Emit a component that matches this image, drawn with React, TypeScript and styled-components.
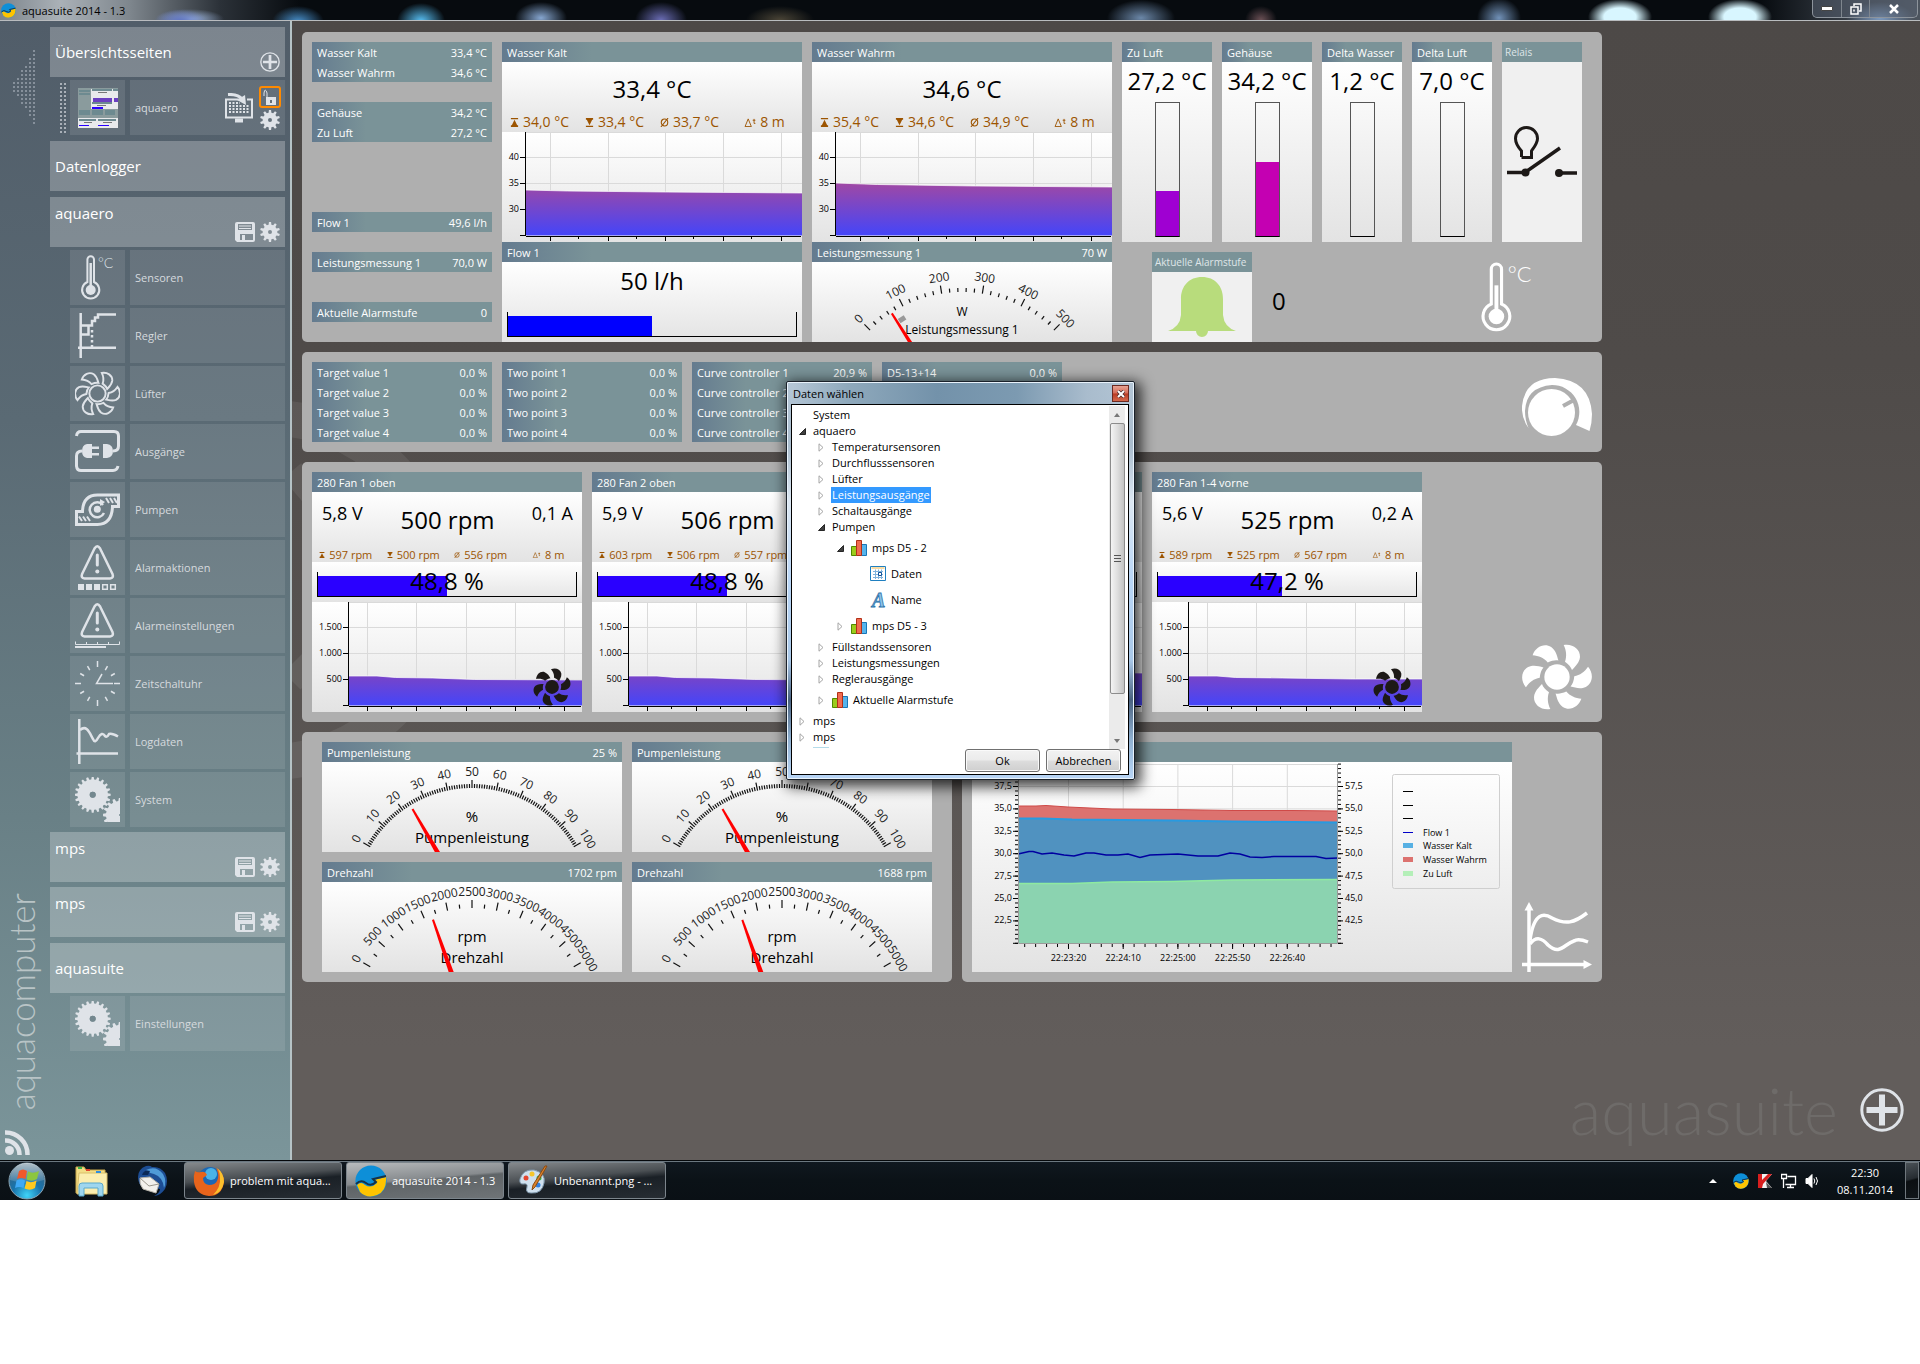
import React from 'react';
import styled, { createGlobalStyle, css } from 'styled-components';

/* ---------- theme ---------- */

const font = '"Open Sans", "Noto Sans", sans-serif';
const thin = 'Lato, "Open Sans", sans-serif';
const ink = '#dfe3e8';
const headerFill = 'linear-gradient(90deg, #647b8f 0, #7a9398 30%, #7a9398 100%)';
const bodyFill = 'linear-gradient(180deg, #ffffff 0, #e3e3e3 100%)';

const GlobalStyle = createGlobalStyle`
  * { box-sizing: border-box; }
  body { margin: 0; background: #fff; font-family: ${font}; font-size: 11px; color: #000; }
  button { font: inherit; color: inherit; border: 0; padding: 0; background: none; text-align: left; }
  svg { display: block; flex: none; }
  ul { list-style: none; margin: 0; padding: 0; }
  h2, h3, p { margin: 0; font-weight: 400; }
`;

const Desktop = styled.div`
  position: relative;
  display: flex;
  flex-direction: column;
  min-height: 1200px;
`;

/* ---------- title bar ---------- */

const TitleBar = styled.header`
  display: flex;
  align-items: center;
  gap: 6px;
  height: 21px;
  padding-left: 1px;
  border-bottom: 1px solid #b9bcbf;
  line-height: 20px;
  background:
    radial-gradient(ellipse 26px 12px at 180px 21px, #5f74c4, transparent),
    radial-gradient(ellipse 34px 10px at 190px 19px, #9fb8e0, transparent),
    radial-gradient(ellipse 26px 16px at 298px 22px, #4a93d0, transparent),
    radial-gradient(ellipse 24px 18px at 421px 21px, #58c0f5, transparent),
    radial-gradient(ellipse 26px 16px at 541px 18px, #86a6d0, transparent),
    radial-gradient(ellipse 26px 18px at 661px 20px, #6a6cb4, transparent),
    radial-gradient(ellipse 34px 14px at 780px 20px, #4a4436, transparent),
    radial-gradient(ellipse 34px 18px at 1141px 18px, #6b87a8, transparent),
    radial-gradient(ellipse 16px 14px at 1261px 20px, #6b5055, transparent),
    radial-gradient(ellipse 22px 20px at 1499px 18px, #7191b8, transparent),
    radial-gradient(ellipse 32px 18px at 1620px 17px, #d8f6ff 50%, transparent),
    radial-gradient(ellipse 32px 18px at 1740px 17px, #d8f6ff 50%, transparent),
    radial-gradient(ellipse 34px 16px at 1880px 18px, #7c9ac0, transparent),
    linear-gradient(90deg, #7d858c 0, #aab1b7 60px, #7e868d 130px, #2b3138 220px, #070b0f 300px,
      #070b0f calc(100% - 160px), #3c434c calc(100% - 60px), #4c545e 100%);
`;

const TitleText = styled.span`
  flex: 1;
  padding-top: 1px;
`;

const WindowButtons = styled.div`
  display: grid;
  grid-template-columns: 28px 28px 48px;
  align-self: flex-start;
  height: 18px;
  margin-right: 2px;
  border: 1px solid #8d949c;
  border-top: 0;
  border-radius: 0 0 5px 5px;
  background: rgba(90, 100, 115, 0.5);
`;

const WindowButton = styled.button`
  display: flex;
  align-items: center;
  justify-content: center;
  & + & { border-left: 1px solid #7f868e; }
`;

/* ---------- frame ---------- */

const AppWindow = styled.div`
  flex: 1;
  display: flex;
`;

const Sidebar = styled.aside`
  display: flex;
  flex: none;
  padding-right: 5px;
  border-right: 2px solid #b6c3c6;
  background: linear-gradient(180deg, #515d69 0, #5a6a74 35%, #698086 70%, #7b959a 100%);
`;

const Rail = styled.div`
  display: flex;
  flex-direction: column;
  align-items: flex-start;
  width: 50px;
  padding: 29px 0 5px 5px;
`;

const Brand = styled.div`
  margin: auto 0 20px 0;
  writing-mode: vertical-rl;
  transform: rotate(180deg);
  font: 300 35px/32px ${thin};
  color: #b9c4c6;
`;

const Nav = styled.nav`
  display: flex;
  flex-direction: column;
  gap: 6px;
  width: 235px;
  padding-top: 6px;
`;

const NavGroup = styled.div<{ $gap?: number }>`
  display: flex;
  flex-direction: column;
  gap: ${p => p.$gap ?? 3}px;
`;

const NavHead = styled.div<{ $top?: boolean }>`
  display: flex;
  justify-content: space-between;
  height: 50px;
  padding: 5px;
  background: rgba(255, 255, 255, 0.25);
  color: #fff;
  font-size: 15px;
  line-height: ${p => (p.$top ? '23px' : '40px')};
`;

const HeadTools = styled.div`
  display: flex;
  gap: 5px;
  align-self: flex-end;
`;

const NavItem = styled.div`
  display: grid;
  grid-template-columns: 55px 155px;
  gap: 5px;
  justify-content: end;
  position: relative;
`;

const NavIcon = styled.div`
  display: flex;
  align-items: center;
  justify-content: center;
  height: 55px;
  background: rgba(255, 255, 255, 0.1);
  color: ${ink};
`;

const NavLabel = styled.div`
  display: flex;
  align-items: center;
  gap: 6px;
  padding: 0 4px 0 5px;
  background: rgba(255, 255, 255, 0.1);
  color: #d6dade;
`;

const NavButton = styled.button`
  flex: 1;
  height: 100%;
`;

const ToolColumn = styled.div`
  display: flex;
  flex-direction: column;
  align-items: center;
  gap: 2px;
`;

const LockButton = styled.button`
  width: 22px;
  height: 22px;
  border: 2px solid #ff8a00;
  border-radius: 3px;
`;

const Grip = styled.div`
  position: absolute;
  left: 9px;
  top: 2px;
  width: 7px;
  height: 53px;
  background: radial-gradient(circle, #a9b0b8 1px, transparent 1px) 0 0 / 4px 4px;
`;

const Main = styled.main`
  position: relative;
  flex: 1;
  min-width: 0;
  display: flex;
  flex-direction: column;
  gap: 10px;
  padding: 11px 10px 28px;
  background: linear-gradient(180deg, #4d4947 0, #4f4b49 30%, #625d5b 90%, #625d5b 100%);
`;

const Backdrop = styled.svg`
  position: absolute;
  left: 0;
  top: 360px;
`;

const Panel = styled.section<{ $pad?: string; $grow?: boolean }>`
  position: relative;
  display: flex;
  gap: 10px;
  max-width: 1300px;
  padding: ${p => p.$pad ?? '10px'};
  border-radius: 5px;
  background: #afafaf;
  ${p => p.$grow && css`flex: 1;`}
`;

const PanelRow = styled.div`
  display: flex;
  gap: 10px;
  max-width: 1300px;
`;

const Corner = styled.div`
  align-self: flex-end;
  margin-left: auto;
  color: #fff;
`;

const Foot = styled.footer`
  display: flex;
  align-items: center;
  justify-content: flex-end;
  gap: 22px;
  margin-top: auto;
  padding-right: 6px;
  color: ${ink};
`;

const Watermark = styled.span`
  font: 300 65px/44px ${thin};
  color: #6e6b69;
`;

/* ---------- widgets ---------- */

const Stack = styled.div<{ $gap?: number }>`
  display: flex;
  flex-direction: column;
  gap: ${p => p.$gap ?? 0}px;
`;

const ValueList = styled.div<{ $before?: number }>`
  width: 180px;
  margin-top: ${p => p.$before ?? 0}px;
  background: ${headerFill};
  color: #fff;
`;

const ValueRow = styled.div`
  display: flex;
  justify-content: space-between;
  height: 20px;
  padding: 0 5px;
  line-height: 21px;
  white-space: nowrap;
`;

const Widget = styled.article<{ $width: number; $flat?: boolean }>`
  display: flex;
  flex-direction: column;
  width: ${p => p.$width}px;
  ${p => p.$flat && css`background: #f0f0f0;`}
`;

const WidgetHead = styled.h3<{ $flat?: boolean }>`
  display: flex;
  justify-content: space-between;
  height: 20px;
  padding: 0 ${p => (p.$flat ? 3 : 5)}px;
  background: ${p => (p.$flat ? '#7a9398' : headerFill)};
  color: ${p => (p.$flat ? '#dfe6e8' : '#fff')};
  font-size: ${p => (p.$flat ? 10 : 11)}px;
  line-height: 21px;
  white-space: nowrap;
`;

const Body = styled.div<{ $height: number }>`
  display: flex;
  flex-direction: column;
  height: ${p => p.$height}px;
  background: ${bodyFill};
`;

const Big = styled.p<{ $line: number }>`
  font-size: 24px;
  line-height: ${p => p.$line}px;
  text-align: center;
  white-space: nowrap;
`;

const FanValues = styled.div`
  display: grid;
  grid-template-columns: 1fr auto 1fr;
  padding: 0 9px 0 10px;
`;

const Side = styled.span<{ $end?: boolean }>`
  font-size: 18px;
  line-height: 42px;
  text-align: ${p => (p.$end ? 'right' : 'left')};
`;

const StatGrid = styled.div<{ $small?: boolean }>`
  display: grid;
  grid-template-columns: repeat(4, 1fr);
  color: #9c5400;
  font-size: ${p => (p.$small ? 11 : 14)}px;
  line-height: ${p => (p.$small ? 14 : 12)}px;
`;

const Stat = styled.span`
  display: flex;
  align-items: center;
  justify-content: center;
  gap: 4px;
  white-space: nowrap;
`;

const BarFrame = styled.div`
  position: relative;
  height: 25px;
  margin: auto 5px 5px;
  padding-top: 4px;
  border: 1px solid #000;
  border-top: 0;
`;

const BarFill = styled.div<{ $color: string }>`
  height: 100%;
  background: ${p => p.$color};
`;

const BarText = styled.span`
  position: absolute;
  inset: 0;
  font-size: 24px;
  line-height: 18px;
  text-align: center;
`;

const Column = styled.div`
  display: flex;
  flex-direction: column;
  justify-content: flex-end;
  align-self: center;
  width: 25px;
  height: 135px;
  margin: auto 0 5px;
  border: 1px solid #555;
  border-bottom-color: #000;
`;

const AlarmRow = styled.div`
  display: flex;
  gap: 20px;
  padding: 0 40px 0 30px;
`;

const AlarmValue = styled.div`
  display: flex;
  align-items: center;
  padding-top: 8px;
`;

const Center = styled.div<{ $height: number }>`
  display: flex;
  align-items: center;
  justify-content: center;
  height: ${p => p.$height}px;
`;

const ChartSvg = styled.svg`
  font-family: ${font};
`;

const FanChart = styled.div`
  position: relative;
`;

const FanBadge = styled.div`
  position: absolute;
  right: 11px;
  bottom: 6px;
  color: #1d1917;
`;

const GaugeGrid = styled.div`
  display: grid;
  grid-template-columns: 300px 300px;
  gap: 10px;
`;

/* ---------- dialog ---------- */

const Dialog = styled.div`
  position: absolute;
  left: 786px;
  top: 381px;
  width: 349px;
  padding: 0 5px 4px 4px;
  border: 1px solid #1b222b;
  border-radius: 2px;
  box-shadow: inset 0 0 0 1px #e8f2fb, 3px 4px 14px 3px rgba(0, 0, 0, 0.75);
  background:
    linear-gradient(90deg, transparent 0, transparent 6px, #8fa9bc 60px, #7392aa 150px, #7c9ab1 230px, #a9bccd 300px, transparent 343px) 0 1px / 100% 21px no-repeat,
    linear-gradient(180deg, #b4c6d6 0, #a9bccd 16%, #dce7f2 30%, #b9d6f7 50%, #a9c8e8 70%, #4a6280 80%, #8fb0d0 90%, #b9d6f7 100%);
`;

const DialogTitle = styled.div`
  display: flex;
  align-items: center;
  justify-content: space-between;
  height: 22px;
  padding: 1px 0 0 2px;
  line-height: 20px;
`;

const CloseButton = styled.button`
  display: flex;
  align-items: center;
  justify-content: center;
  width: 17px;
  height: 17px;
  border: 1px solid #6b2a22;
  background: linear-gradient(180deg, #e8a394 0, #d56a55 48%, #b83a22 52%, #d4694c 100%);
`;

const DialogBody = styled.div`
  padding: 1px 3px 2px 1px;
  border: 1px solid #000;
  background: #fff;
`;

const TreeArea = styled.div`
  display: flex;
  justify-content: space-between;
  height: 343px;
  overflow: hidden;
`;

const Tree = styled.ul`
  padding-top: 1px;
`;

const Branch = styled.li<{ $tall?: boolean; $level: number }>`
  display: flex;
  align-items: center;
  height: ${p => (p.$tall ? 26 : 16)}px;
  padding-left: ${p => 1 + p.$level * 19}px;
  line-height: 16px;
`;

const NextBranch = styled.li`
  width: 16px;
  height: 1px;
  margin: 2px 0 0 20px;
  background: #b5dcea;
`;

const Twist = styled.span`
  flex: none;
  display: flex;
  align-items: center;
  width: 19px;
  padding-left: 5px;
`;

const BranchLabel = styled.button<{ $on?: boolean }>`
  display: flex;
  align-items: center;
  gap: 5px;
  height: 16px;
  line-height: 16px;
  ${p => p.$on && css`
    margin: 0 -1px;
    padding: 0 1px;
    background: #3399ff;
    color: #fff;
  `}
`;

const ScrollTrack = styled.div`
  display: flex;
  flex-direction: column;
  align-items: center;
  width: 16px;
  background: #ebebeb;
`;

const ScrollArrow = styled.button`
  display: flex;
  align-items: center;
  justify-content: center;
  width: 16px;
  height: 17px;
`;

const ScrollThumb = styled.div`
  display: flex;
  align-items: center;
  justify-content: center;
  width: 15px;
  height: 271px;
  margin-bottom: auto;
  border: 1px solid #8c8c8c;
  border-radius: 2px;
  background: linear-gradient(90deg, #f4f4f4 0, #dedede 50%, #c2c2c2 100%);
`;

const DialogActions = styled.div`
  display: flex;
  justify-content: flex-end;
  gap: 6px;
  padding-right: 4px;
`;

const DialogButton = styled.button`
  width: 75px;
  height: 23px;
  border: 1px solid #707070;
  border-radius: 3px;
  box-shadow: inset 0 0 0 1px #fafafa;
  background: linear-gradient(180deg, #f2f2f2 0, #ebebeb 49%, #dddddd 51%, #cfcfcf 100%);
  text-align: center;
`;

/* ---------- taskbar ---------- */

const Taskbar = styled.div`
  display: flex;
  align-items: stretch;
  height: 40px;
  border-top: 1px solid #05080b;
  box-shadow: inset 0 1px 0 #6b7780;
  background: linear-gradient(180deg, #101820 0, #0b1217 50%, #0a1015 100%);
  color: #fff;
`;

const Launcher = styled.div`
  display: flex;
  align-items: center;
  gap: 28px;
  width: 184px;
  padding-left: 8px;
`;

const TaskButton = styled.button<{ $active?: boolean }>`
  display: flex;
  align-items: center;
  gap: 5px;
  width: 158px;
  margin: 1px 4px 1px 0;
  padding-left: 8px;
  border: 1px solid #7c858c;
  border-radius: 3px;
  white-space: nowrap;
  background: ${p =>
    p.$active
      ? 'linear-gradient(175deg, #b9bcbe 0, #878b8e 45%, #5f6467 50%, #6f7477 100%)'
      : 'linear-gradient(175deg, #85898c 0, #4b5054 40%, #1a2026 55%, #272d33 100%)'};
`;

const Tray = styled.div`
  display: flex;
  align-items: center;
  gap: 8px;
  margin-left: auto;
`;

const Clock = styled.div`
  width: 72px;
  line-height: 17px;
  text-align: center;
`;

const ShowDesktop = styled.button`
  align-self: stretch;
  width: 14px;
  margin: 1px 1px 1px -4px;
  border: 1px solid #6f777d;
  background: linear-gradient(165deg, #4a5157 0, #262c31 45%, #0b0f12 50%, #11161a 100%);
`;

/* ---------- icons ---------- */

const BLADE =
  'M20,-96 C45,-101 70,-85 69,-60 C67,-42 55,-32 45,-21 C42,-30 35,-38 24,-46 C30,-62 28,-80 20,-96Z';

function Fan({ size, outline, turn = 0 }: { size: number; outline?: boolean; turn?: number }) {
  return (
    <svg
      width={size}
      height={size}
      viewBox="-105 -105 210 210"
      fill={outline ? 'none' : 'currentColor'}
      stroke={outline ? 'currentColor' : 'none'}
      strokeWidth="9"
    >
      <circle r="38" />
      {[0, 60, 120, 180, 240, 300].map(a => (
        <path key={a} d={BLADE} transform={`rotate(${a + turn})`} />
      ))}
    </svg>
  );
}

function gearPath(cx: number, cy: number, teeth: number, outer: number, inner: number, hole: number) {
  const pts: string[] = [];
  const step = (Math.PI * 2) / teeth;
  for (let i = 0; i < teeth; i++) {
    const a = i * step - Math.PI / 2;
    [
      [-0.3, inner],
      [-0.17, outer],
      [0.17, outer],
      [0.3, inner],
    ].forEach(([o, r]) => {
      pts.push(`${(cx + Math.cos(a + o * step) * r).toFixed(2)},${(cy + Math.sin(a + o * step) * r).toFixed(2)}`);
    });
  }
  return `M${pts.join('L')}Z M${cx + hole},${cy} a${hole},${hole} 0 1 0 ${-2 * hole},0 a${hole},${hole} 0 1 0 ${2 * hole},0Z`;
}

const Gear = () => (
  <svg width="20" height="20" viewBox="0 0 20 20">
    <path d={gearPath(10, 10, 10, 10, 7.4, 2)} fill={ink} fillRule="evenodd" />
  </svg>
);

const Disk = () => (
  <svg width="20" height="20" viewBox="0 0 20 20" fill={ink}>
    <path
      fillRule="evenodd"
      d="M2 0H18Q20 0 20 2V18Q20 20 18 20H2L0 18V2Q0 0 2 0ZM3 2V8H17V2ZM5 12V18H18V12Z"
    />
    <path d="M4 3.5H16V4.5H4ZM4 6H16V7H4ZM7 13H10V18H7Z" />
  </svg>
);

const Plus = ({ size }: { size: number }) => (
  <svg width={size} height={size} viewBox="0 0 44 44" fill="none" stroke={ink}>
    <circle cx="22" cy="22" r="20.2" strokeWidth="3" />
    <path d="M22 6.500V37.500M6.500 22H37.500" strokeWidth="6" />
  </svg>
);

const Thermo = ({ size, level = 8 }: { size: number; level?: number }) => (
  <svg width={size} height={size} viewBox="0 0 45 45" fill="none" stroke="currentColor" strokeWidth="2">
    <path d="M12.400 27V4.600a3.300 3.300 0 0 1 6.600 0V27a8.600 8.600 0 1 1-6.600 0Z" />
    <circle cx="15.700" cy="35" r="5" fill="currentColor" stroke="none" />
    <path d={`M15.700 ${level}V34`} strokeWidth="2.500" />
    <text x="23" y="13" fill="currentColor" stroke="none" fontFamily={thin} fontWeight="300" fontSize="14">
      °C
    </text>
  </svg>
);

const NavSvg = styled.svg.attrs({ width: 45, height: 45, viewBox: '0 0 45 45' })`
  fill: none;
  stroke: ${ink};
  color: ${ink};
`;

const warn = (
  <>
    <path d="M19.500 3.500Q22.300-1 25.100 3.500L37.500 29Q39 33 35 33.500H9.600Q5.600 33 7.100 29Z" strokeWidth="2.500" />
    <path d="M22.300 10V20" strokeWidth="3" strokeLinecap="round" />
    <circle cx="22.300" cy="26.500" r="2" fill={ink} stroke="none" />
  </>
);

const icons: Record<string, React.ReactNode> = {
  Sensoren: <Thermo size={45} />,
  Regler: (
    <NavSvg strokeWidth="2.500">
      <path d="M5.700 0V45M3 34.700H41M5 12.500H17V8H20V4.500H23V1.500H41M5 21.500H13.500V13" />
      <path d="M17 17V34" strokeDasharray="2.500 2.500" />
    </NavSvg>
  ),
  Lüfter: <Fan size={45} outline />,
  Ausgänge: (
    <NavSvg strokeWidth="3">
      <path d="M1.500 7Q2 2.500 6 2.500H39Q43.500 2.500 43.500 7V17Q43.500 22 38 22M7 22Q1.500 22 1.500 27V37Q2 41.500 6 41.500H38Q42 41.500 43 37" />
      <path d="M17 15H12Q7 16 7 22Q7 28 12 29H17ZM28 15H32Q38 16 38 22Q38 28 32 29H28ZM17 17.500H24V20H17ZM17 24H24V26.500H17Z" fill={ink} stroke="none" />
    </NavSvg>
  ),
  Pumpen: (
    <NavSvg strokeWidth="3">
      <path d="M1.500 24.500H7.500Q8 8 22.500 8H43.500V19.500H37.500Q37 37 22.500 37.500H1.500Z" />
      <path d="M28 18A7.500 7.500 0 1 0 29 26" strokeWidth="2.500" />
      <path d="M25 12L30 15L25 19Z" fill={ink} stroke="none" />
      <circle cx="22.300" cy="22.300" r="3.500" fill={ink} stroke="none" />
      <path d="M31 11L34 16M35 11L38 16M39 11L42 16M4 29.500L7 34M8 29.500L11 34M12 29.500L15 34" strokeWidth="2" />
    </NavSvg>
  ),
  Alarmaktionen: (
    <NavSvg>
      {warn}
      <path d="M3 39H9V45H3ZM11 39H17V45H11ZM19 39H25V45H19Z" fill={ink} stroke="none" />
      <path d="M27.700 39.700H32.300V44.300H27.700ZM35.700 39.700H40.300V44.300H35.700Z" strokeWidth="1.500" />
    </NavSvg>
  ),
  Alarmeinstellungen: (
    <NavSvg>
      {warn}
      <path d="M.5 38.500V41.500H44.500V38.500M11.500 39V41M22.500 39V41M33.500 39V41" />
      <path d="M0 44H31" strokeWidth="2" />
    </NavSvg>
  ),
  Zeitschaltuhr: (
    <NavSvg strokeWidth="1.500">
      {Array.from({ length: 12 }, (_, i) => (
        <path key={i} d={i % 3 ? 'M22.500 2.500V7' : 'M22.500 0V6'} transform={`rotate(${i * 30} 22.5 22.5)`} />
      ))}
      <path d="M27 13L21.500 22.500H38" />
    </NavSvg>
  ),
  Logdaten: (
    <NavSvg strokeWidth="2.500">
      <path d="M4.300 0V45M1.500 34.500H43" />
      <path d="M5 11C12 5 15 15 18 20Q20 25 23 19Q27 12 30 17Q32 19 34 15Q37 14 43 17.500" />
    </NavSvg>
  ),
  System: (
    <NavSvg>
      <path
        d={`${gearPath(17.7, 17.7, 20, 18, 15.2, 3)} ${gearPath(45, 38, 16, 17, 14, 1)}`}
        fill={ink}
        stroke="none"
        fillRule="nonzero"
      />
      <circle cx="17.700" cy="17.700" r="3" fill="#74888f" stroke="none" />
    </NavSvg>
  ),
};

const Thumb = () => (
  <svg width="40" height="40" viewBox="0 0 40 40">
    <path d="M0 0H40V40H0Z" fill="#e9eaec" />
    <path d="M0 0H40V1H0ZM0 0H13V21H0ZM0 21H40V30H0Z" fill="#8a9b9d" />
    <path d="M1 2H12V4H1ZM1 5H12V7H1ZM14 1H34V3H14ZM35 1H40V3H35ZM14 14H34V16H14ZM1 22H12V27H1ZM14 22H25V27H14ZM27 22H37V27H27ZM1 31H18V33H1ZM20 31H38V33H20Z" fill="#6d8a90" />
    <path d="M15 10H34V14H15ZM36 10H40V14H36Z" fill="#6a3fc0" />
    <path d="M14 19H25V21H14ZM1 37H11V38H1ZM20 37H31V38H20Z" fill="#2a00ff" />
    <path d="M20 4H29V5H20ZM19 17H28V18H19ZM6 34H14V35H6ZM25 34H34V35H25Z" fill="#777" />
  </svg>
);

const Desk = () => (
  <svg width="28" height="30" viewBox="0 0 28 30" fill="none" stroke={ink}>
    <path d="M15 6.500H1V24.500H27V6.500H22" strokeWidth="2" />
    <path d="M4 10H15M4 13H24M4 16H24M4 19H24" strokeDasharray="2 1.500" strokeWidth="2" />
    <path d="M10 27.500H18" strokeWidth="4" />
    <path d="M3 1.500Q13 1 17 6" strokeWidth="3" />
    <path d="M12 7L21 12L20 2Z" fill={ink} stroke="none" />
  </svg>
);

const Lock = () => (
  <svg width="18" height="18" viewBox="0 0 18 18">
    <path d="M3 8V5Q4-1 6 5V9" fill="none" stroke={ink} />
    <path fillRule="evenodd" d="M5 9H15V17H5ZM9 12V15H11V12Z" fill={ink} />
  </svg>
);

const CollapseArrow = () => (
  <svg width="30" height="76" viewBox="0 0 30 76" fill="#86909b">
    {Array.from({ length: 6 }, (_, c) =>
      Array.from({ length: 19 }, (_, r) =>
        Math.abs(r - 9) <= 1.6 * c + 1 ? <path key={`${c}-${r}`} d={`M${8 + c * 4} ${r * 4}h2v2h-2z`} /> : null,
      ),
    )}
  </svg>
);

const Rss = () => (
  <svg width="25" height="25" viewBox="0 0 25 25" fill="none" stroke={ink} strokeWidth="4.500">
    <circle cx="4.500" cy="20.500" r="4.500" fill={ink} stroke="none" />
    <path d="M0 10.500A14 14 0 0 1 14.500 25M0 2.500A22 22 0 0 1 22.500 25" />
  </svg>
);

const AquaLogo = ({ size }: { size: number }) => (
  <svg width={size} height={size} viewBox="0 0 16 16">
    <circle cx="8" cy="8" r="7.800" fill="#0d8fd8" />
    <path d="M1 10Q3 8 5 10Q8 12 11 9L9.500 7.500L15.500 6Q16 13 11 15Q6 17 2.500 13.500Z" fill="#ffc400" />
    <path d="M.5 9.500Q3 7 5.500 9Q8 11 10.500 8.500L9 7L15.500 5.500" fill="none" stroke="#16324a" strokeWidth="1" />
  </svg>
);

const Knob = () => (
  <svg width="70" height="70" viewBox="0 0 70 70">
    <path d="M6.500 56A34 34 0 0 1 0 34Q3 6 33 6Q68 8 70 42Q70 51 67.500 59L54 53A27 27 0 0 0 30 13Q4 15 3 39Q3 48 6.500 56Z" fill="#fff" />
    <circle cx="29.500" cy="40.500" r="23.500" fill="#fff" />
    <path d="M41 34L52 28" stroke="#afafaf" strokeWidth="4" />
  </svg>
);

const CurveIcon = () => (
  <svg width="70" height="70" viewBox="0 0 70 70" fill="none" stroke="#fff" strokeWidth="3.500">
    <path d="M7 70V8M0 62.500H64" />
    <path d="M7 0L11.500 8.500H2.500ZM70 62.500L61.500 58V67Z" fill="#fff" stroke="none" />
    <path d="M8 38C12 10 22 11 30 16C44 23 52 21 65 11M8 42C14 34 20 36 26 43C38 54 42 42 52 39Q56 36 66 40" />
  </svg>
);

const Relay = () => (
  <svg width="70" height="52" viewBox="0 0 70 52" fill="none" stroke="#1d1917" strokeWidth="3">
    <path d="M14.500 31V25C10 20 8.500 16 8.500 12.500A11 11 0 0 1 30.500 12.500C30.500 17 28 20 24.500 25V31.500H14.500" />
    <path d="M0 46.500H18L53 22M52 47H70" strokeWidth="3.500" />
    <circle cx="18.500" cy="46.500" r="4" fill="#1d1917" stroke="none" />
    <circle cx="52" cy="47" r="4" fill="#1d1917" stroke="none" />
  </svg>
);

const Bell = () => (
  <svg width="68" height="61" viewBox="0 0 68 61" fill="#b8dc7c">
    <path d="M34 0C47 0 55 9 55 22V38Q56 50 68 54H40A6 6 0 0 1 28 54H0Q12 50 13 38V22C13 9 21 0 34 0Z" />
  </svg>
);

const Bars = () => (
  <svg width="16" height="16" viewBox="0 0 16 16">
    <path d="M.5 6.500H5.500V15.500H.5Z" fill="#9ccc1c" stroke="#4f8a00" />
    <path d="M10.500 4.500H15.500V15.500H10.500Z" fill="#56b4ec" stroke="#1777b8" />
    <path d="M5.500 .5H10.500V15.500H5.500Z" fill="#f26b50" stroke="#b23018" />
  </svg>
);

const Sheet = () => (
  <svg width="16" height="16" viewBox="0 0 16 16">
    <path d="M.5 .5H15.500V14.500H.5Z" fill="#fff" stroke="#1f7fc0" />
    <path d="M1.500 2H14.500" stroke="#f2b84b" />
    <path d="M3 5.500H13M3 8.500H13M3 11.500H13M5.500 3.500V13M8.500 3.500V13M11.500 3.500V13" stroke="#7fb2dc" />
    <path d="M8.500 6.500H11.500V9.500H8.500Z" fill="#fff" stroke="#14549a" />
  </svg>
);

const LetterA = () => (
  <svg width="16" height="16" viewBox="0 0 16 16">
    <text x="2" y="15" fontFamily='"Liberation Serif", serif' fontStyle="italic" fontWeight="700" fontSize="20" fill="#8cc4ec" stroke="#2f74aa" strokeWidth=".8">
      A
    </text>
  </svg>
);

const Closed = () => (
  <svg width="6" height="9" viewBox="0 0 6 9">
    <path d="M1 .8L5 4.500L1 8.200Z" fill="#fff" stroke="#a5a5a5" />
  </svg>
);

const Open = () => (
  <svg width="7" height="7" viewBox="0 0 7 7">
    <path d="M6.500 .5V6.500H.5Z" fill="#404040" stroke="#262626" />
  </svg>
);

function StatIcon({ kind, small }: { kind: string; small?: boolean }) {
  const s = small ? 6 : 9;
  return (
    <svg width={kind === 'time' ? s + 3 : s} height={s} viewBox={kind === 'time' ? '0 0 13 10' : '0 0 10 10'} fill="currentColor" stroke="none">
      {kind === 'max' && <path d="M1 0H9V1.500H1ZM5 2L8 8H9V10H1V8H2Z" />}
      {kind === 'min' && <path d="M1 8.500H9V10H1ZM5 8L2 2H1V0H9V2H8Z" />}
      {kind === 'avg' && (
        <g fill="none" stroke="currentColor" strokeWidth="1.200">
          <ellipse cx="5" cy="5" rx="3.600" ry="3.800" />
          <path d="M1 10L9 0" />
        </g>
      )}
      {kind === 'time' && (
        <g fill="none" stroke="currentColor">
          <path d="M1 9.500L4.500 1L8 9.500Z" />
          <path d="M11 1V6H12.500M9.500 2.500H12.500" />
        </g>
      )}
    </svg>
  );
}

/* ---------- composed widgets ---------- */

const STATS = ['max', 'min', 'avg', 'time'];

const Stats = ({ values, small }: { values: string[]; small?: boolean }) => (
  <StatGrid $small={small}>
    {values.map((v, i) => (
      <Stat key={STATS[i]}>
        <StatIcon kind={STATS[i]} small={small} />
        {v}
      </Stat>
    ))}
  </StatGrid>
);

const Values = ({ rows, before }: { rows: [string, string][]; before?: number }) => (
  <ValueList $before={before}>
    {rows.map(([k, v]) => (
      <ValueRow key={k}>
        <span>{k}</span>
        <span>{v}</span>
      </ValueRow>
    ))}
  </ValueList>
);

interface TrendProps {
  id: string;
  width: number;
  axis: number;
  first: number;
  step: number;
  labels: string[];
  line: [number, number][];
  top: string;
}

function Trend({ id, width, axis, first, step, labels, line, top }: TrendProps) {
  const xs = [0, 1, 2, 3, 4].map(i => Math.round(first + i * step) + 0.5);
  const pts = line.map(([x, y]) => `${axis + x * (width - axis)},${y}`).join(' L');
  return (
    <ChartSvg width={width} height="110" viewBox={`0 0 ${width} 110`}>
      <defs>
        <linearGradient id={id} x1="0" x2="0" y1="0" y2="1">
          <stop offset="0" stopColor={top} />
          <stop offset="1" stopColor="#4545f8" />
        </linearGradient>
        <linearGradient id={`${id}-bg`} x1="0" x2="0" y1="0" y2="1">
          <stop offset="0" stopColor="#fff" />
          <stop offset="1" stopColor="#e3e3e3" />
        </linearGradient>
      </defs>
      <path d={`M0 0H${width}V110H0Z`} fill={`url(#${id}-bg)`} />
      <path d={xs.map(x => `M${x} 0V103`).join('') + [0.5, 25.5, 51.5, 77.5].map(y => `M${axis} ${y}H${width}`).join('')} stroke="#dadada" />
      <path d={`M${pts} L${width},103 L${axis},103Z`} fill={`url(#${id})`} />
      <path d={`M${pts}`} fill="none" stroke="#fff" strokeOpacity=".7" />
      <path d={`M${axis + 0.5} 103.500H${width}`} stroke="#a5a5f5" />
      <path
        d={
          `M${axis - 0.5} 0V104M${axis} 104.500H${width - 1}` +
          [25.5, 51.5, 77.5, 103.5].map(y => `M${axis - 6} ${y}H${axis}`).join('') +
          xs.map(x => `M${x} 105V109`).join('') +
          xs.slice(0, 4).map(x => `M${Math.round(x + step / 2) - 0.5} 105V107`).join('')
        }
        stroke="#000"
      />
      {labels.map((t, i) => (
        <text key={t} x={axis - 7} y={28 + i * 26} fontSize="9" textAnchor="end">
          {t}
        </text>
      ))}
    </ChartSvg>
  );
}

interface GaugeProps {
  height: number;
  radius: number;
  cy: number;
  sweep: number;
  max: number;
  major: number;
  minor: number;
  value: number;
  unit: string;
  name: string;
  unitY: number;
  nameY: number;
  size: number;
  pivot: number;
  reach: number;
  marker?: boolean;
}

function Gauge(g: GaugeProps) {
  const at = (v: number) => -g.sweep + (v / g.max) * g.sweep * 2;
  const ticks = Array.from({ length: Math.round(g.max / g.minor) + 1 }, (_, i) => i * g.minor);
  const labels = ticks.filter(v => v % g.major === 0);
  const tip = g.pivot - g.reach;
  return (
    <ChartSvg width="300" height={g.height} viewBox={`0 0 300 ${g.height}`}>
      {ticks.map(v => (
        <path
          key={v}
          d={`M150 ${g.cy - g.radius + (v % g.major ? 4 : 0)}V${g.cy - g.radius + 8}`}
          transform={`rotate(${at(v)} 150 ${g.cy})`}
          stroke="#111"
          strokeWidth="1.200"
        />
      ))}
      {labels.map(v => (
        <text
          key={v}
          x="150"
          y={g.cy - g.radius - 4}
          transform={`rotate(${at(v)} 150 ${g.cy})`}
          textAnchor="middle"
          fontSize="12"
          fill="#222"
        >
          {v}
        </text>
      ))}
      <text x="150" y={g.unitY} textAnchor="middle" fontSize={g.size}>
        {g.unit}
      </text>
      <text x="150" y={g.nameY} textAnchor="middle" fontSize={g.size}>
        {g.name}
      </text>
      <g transform={`rotate(${at(g.value)} 150 ${g.pivot})`}>
        {g.marker && <path d={`M152 ${tip + 8}h7v5h-7z`} fill="#999" />}
        <path d={`M149 ${tip}H151L154 ${g.pivot}H146Z`} fill="#ff0000" />
      </g>
    </ChartSvg>
  );
}

function HistoryChart() {
  const major = [0, 1, 2, 3, 4, 5, 6].map(i => 24.5 + i * 22.4);
  const minor = Array.from({ length: 41 }, (_, i) => 181.3 - i * 4.48);
  const xs = [96.5, 151.2, 205.9, 260.6, 315.3];
  const left = ['37,5', '35,0', '32,5', '30,0', '27,5', '25,0', '22,5'];
  const right = ['57,5', '55,0', '52,5', '50,0', '47,5', '45,0', '42,5'];
  const times = ['22:23:20', '22:24:10', '22:25:00', '22:25:50', '22:26:40'];
  const legend = [
    ['', '#000'],
    ['', '#000'],
    ['', '#000'],
    ['Flow 1', '#0000c8'],
    ['Wasser Kalt', '#57b0e3'],
    ['Wasser Wahrm', '#dc726f'],
    ['Zu Luft', '#b4efb8'],
  ];
  return (
    <ChartSvg width="540" height="210" viewBox="0 0 540 210">
      <path
        d={xs.map(x => `M${x} 2V181`).join('') + major.map(y => `M46 ${y}H366`).join('') + 'M46 2.500H366'}
        stroke="#dadada"
      />
      <path d="M46 44H64L74 43.500L96 45L140 47L200 47.500L260 48.500L320 48.500L366 49V181H46Z" fill="#dc726f" />
      <path d="M46 44H64L74 43.500L96 45L140 47L200 47.500L260 48.500L320 48.500L366 49" fill="none" stroke="#cf4a48" />
      <path d="M46 56.500H70L100 57.500L200 58.500L260 59.500L366 60.500V181H46Z" fill="#5092c0" />
      <path d="M46 56.500H70L100 57.500L200 58.500L260 59.500L366 60.500" fill="none" stroke="#289ae0" strokeWidth="2" />
      <path d="M46 121.500H100L140 120L200 119.500L260 118L366 117.500V181H46Z" fill="#8bd3b0" />
      <path d="M46 121.500H100L140 120L200 119.500L260 118L366 117.500" fill="none" stroke="#8eeaa0" strokeWidth="1.500" />
      <path
        d="M46 92L57 89.500H61L70 92L80 91L92 93L102 94L114 91H122L134 93H146L156 92L168 95.500L178 93L206 92L226 94H246L258 91L268 92L278 95L290 95.500L302 94.500H344L354 96.500L366 96"
        fill="none"
        stroke="#0000a0"
        strokeWidth="1.500"
      />
      <path
        d={
          major.concat(181.3).map(y => `M41 ${y}H46M366 ${y}H371`).join('') +
          minor.map(y => `M43 ${y}H46M366 ${y}H369`).join('') +
          xs.map(x => `M${x} 182V187`).join('') +
          Array.from({ length: 29 }, (_, i) => `M${52.7 + i * 10.94} 182V185`).join('')
        }
        stroke="#000"
      />
      <path d="M46.500 2V181.500H365.500V2" fill="none" stroke="#9a9a9a" />
      {left.map((t, i) => (
        <g key={t} fontSize="9">
          <text x="40" y={27 + i * 22.4} textAnchor="end">
            {t}
          </text>
          <text x="373" y={27 + i * 22.4}>
            {right[i]}
          </text>
        </g>
      ))}
      {times.map((t, i) => (
        <text key={t} x={xs[i]} y="199" fontSize="9" textAnchor="middle">
          {t}
        </text>
      ))}
      <rect x="420.500" y="12.500" width="107" height="114" rx="2" fill="none" stroke="#cfcfcf" />
      {legend.map(([t, c], i) => {
        const y = Math.round(29 + i * 13.6);
        return (
          <g key={i}>
            <path d={i < 4 ? `M431 ${y}h10v1h-10z` : `M431 ${y - 2}h10v5h-10z`} fill={c} />
            <text x="451" y={y + 4} fontSize="9">
              {t}
            </text>
          </g>
        );
      })}
    </ChartSvg>
  );
}

const TempWidget = ({ title, value, stats, id, line, top }: { title: string; value: string; stats: string[]; id: string; line: [number, number][]; top: string }) => (
  <Widget $width={300}>
    <WidgetHead>{title}</WidgetHead>
    <Body $height={70}>
      <Big $line={54}>{value}</Big>
      <Stats values={stats} />
    </Body>
    <Trend id={id} width={300} axis={24} first={48} step={57.7} labels={['40', '35', '30']} line={line} top={top} />
  </Widget>
);

const ColumnWidget = ({ title, value, width, fill, color }: { title: string; value: string; width: number; fill?: number; color?: string }) => (
  <Widget $width={width}>
    <WidgetHead>{title}</WidgetHead>
    <Body $height={180}>
      <Big $line={38}>{value}</Big>
      <Column>{fill ? <BarFill $color={color!} style={{ height: `${fill}%` }} /> : null}</Column>
    </Body>
  </Widget>
);

interface FanData {
  title: string;
  volt: string;
  amp: string;
  rpm: string;
  stats: string[];
  percent: string;
  fill: number;
  line: [number, number][];
}

const FanWidget = ({ data, id }: { data: FanData; id: string }) => (
  <Widget $width={270}>
    <WidgetHead>{data.title}</WidgetHead>
    <Body $height={70}>
      <FanValues>
        <Side>{data.volt}</Side>
        <Big $line={56}>{data.rpm}</Big>
        <Side $end>{data.amp}</Side>
      </FanValues>
      <Stats small values={data.stats} />
    </Body>
    <Body $height={40}>
      <BarFrame>
        <BarFill $color="#2a00ff" style={{ width: `${data.fill}%` }} />
        <BarText>{data.percent}</BarText>
      </BarFrame>
    </Body>
    <FanChart>
      <Trend id={id} width={270} axis={37} first={55} step={49.3} labels={['1.500', '1.000', '500']} line={data.line} top="#7844c8" />
      <FanBadge>
        <Fan size={38} turn={-15} />
      </FanBadge>
    </FanChart>
  </Widget>
);

const fanLine: [number, number][] = [[0, 74], [0.12, 74], [0.2, 75.5], [0.36, 76], [0.54, 77.5], [1, 78]];

const fans: FanData[] = [
  { title: '280 Fan 1 oben', volt: '5,8 V', amp: '0,1 A', rpm: '500 rpm', stats: ['597 rpm', '500 rpm', '556 rpm', '8 m'], percent: '48,8 %', fill: 50, line: fanLine },
  { title: '280 Fan 2 oben', volt: '5,9 V', amp: '0,1 A', rpm: '506 rpm', stats: ['603 rpm', '506 rpm', '557 rpm', '8 m'], percent: '48,8 %', fill: 50, line: fanLine },
  { title: '280 Fan 3 oben', volt: '5,9 V', amp: '0,1 A', rpm: '548 rpm', stats: ['640 rpm', '548 rpm', '590 rpm', '8 m'], percent: '48,8 %', fill: 50, line: [[0, 68], [1, 71]] },
  { title: '280 Fan 1-4 vorne', volt: '5,6 V', amp: '0,2 A', rpm: '525 rpm', stats: ['589 rpm', '525 rpm', '567 rpm', '8 m'], percent: '47,2 %', fill: 48, line: [[0, 74], [0.12, 74], [0.2, 75.5], [0.4, 76], [0.7, 77], [1, 77]] },
];

const four = (name: string, values: string[]) =>
  values.map((v, i) => [`${name} ${i + 1}`, v] as [string, string]);

const GaugeWidget = ({ title, value, children }: { title: string; value?: string; children: React.ReactNode }) => (
  <Widget $width={300}>
    <WidgetHead>
      <span>{title}</span>
      <span>{value}</span>
    </WidgetHead>
    <Body $height={90}>{children}</Body>
  </Widget>
);

const arc = { height: 90, radius: 125.5, cy: 143.5, sweep: 60, size: 15, unitY: 60, nameY: 81, pivot: 150, reach: 119 };
const percentGauge = (v: number) => <Gauge {...arc} max={100} major={10} minor={1} value={v} unit="%" name="Pumpenleistung" />;
const rpmGauge = (v: number) => <Gauge {...arc} max={5000} major={500} minor={250} value={v} unit="rpm" name="Drehzahl" />;

/* ---------- sidebar ---------- */

const Item = ({ label, icon }: { label: string; icon?: string }) => (
  <NavItem>
    <NavIcon>{icons[icon ?? label]}</NavIcon>
    <NavLabel>
      <NavButton>{label}</NavButton>
    </NavLabel>
  </NavItem>
);

const DeviceTools = () => (
  <HeadTools>
    <button aria-label="Speichern"><Disk /></button>
    <button aria-label="Einstellungen"><Gear /></button>
  </HeadTools>
);

const deviceItems = ['Sensoren', 'Regler', 'Lüfter', 'Ausgänge', 'Pumpen', 'Alarmaktionen', 'Alarmeinstellungen', 'Zeitschaltuhr', 'Logdaten', 'System'];

/* ---------- tree ---------- */

interface Node {
  label: string;
  level: number;
  state?: 'open' | 'closed';
  icon?: React.ReactNode;
  on?: boolean;
}

const nodes: Node[] = [
  { label: 'System', level: 0 },
  { label: 'aquaero', level: 0, state: 'open' },
  { label: 'Temperatursensoren', level: 1, state: 'closed' },
  { label: 'Durchflusssensoren', level: 1, state: 'closed' },
  { label: 'Lüfter', level: 1, state: 'closed' },
  { label: 'Leistungsausgänge', level: 1, state: 'closed', on: true },
  { label: 'Schaltausgänge', level: 1, state: 'closed' },
  { label: 'Pumpen', level: 1, state: 'open' },
  { label: 'mps D5 - 2', level: 2, state: 'open', icon: <Bars /> },
  { label: 'Daten', level: 3, icon: <Sheet /> },
  { label: 'Name', level: 3, icon: <LetterA /> },
  { label: 'mps D5 - 3', level: 2, state: 'closed', icon: <Bars /> },
  { label: 'Füllstandssensoren', level: 1, state: 'closed' },
  { label: 'Leistungsmessungen', level: 1, state: 'closed' },
  { label: 'Reglerausgänge', level: 1, state: 'closed' },
  { label: 'Aktuelle Alarmstufe', level: 1, state: 'closed', icon: <Bars /> },
  { label: 'mps', level: 0, state: 'closed' },
  { label: 'mps', level: 0, state: 'closed' },
];

const DataDialog = () => (
  <Dialog role="dialog" aria-label="Daten wählen">
    <DialogTitle>
      <span>Daten wählen</span>
      <CloseButton aria-label="Schließen">
        <svg width="8" height="8" viewBox="0 0 8 8">
          <path d="M1 1L7 7M7 1L1 7" stroke="#4a2a2a" strokeWidth="3.500" />
          <path d="M1 1L7 7M7 1L1 7" stroke="#fff" strokeWidth="2" />
        </svg>
      </CloseButton>
    </DialogTitle>
    <DialogBody>
      <TreeArea>
        <Tree>
          {nodes.map((n, i) => (
            <Branch key={i} $level={n.level} $tall={!!n.icon}>
              <Twist>{n.state === 'open' ? <Open /> : n.state === 'closed' ? <Closed /> : null}</Twist>
              <BranchLabel $on={n.on}>
                {n.icon}
                {n.label}
              </BranchLabel>
            </Branch>
          ))}
          <NextBranch />
        </Tree>
        <ScrollTrack>
          <ScrollArrow aria-label="Nach oben">
            <svg width="6" height="4" viewBox="0 0 6 4"><path d="M3 0L6 4H0Z" fill="#777" /></svg>
          </ScrollArrow>
          <ScrollThumb>
            <svg width="7" height="8" viewBox="0 0 7 8"><path d="M0 .5H7M0 3.500H7M0 6.500H7" stroke="#555" /></svg>
          </ScrollThumb>
          <ScrollArrow aria-label="Nach unten">
            <svg width="6" height="4" viewBox="0 0 6 4"><path d="M0 0H6L3 4Z" fill="#777" /></svg>
          </ScrollArrow>
        </ScrollTrack>
      </TreeArea>
      <DialogActions>
        <DialogButton>Ok</DialogButton>
        <DialogButton>Abbrechen</DialogButton>
      </DialogActions>
    </DialogBody>
  </Dialog>
);

/* ---------- taskbar icons ---------- */

const StartOrb = () => (
  <svg width="38" height="38" viewBox="0 0 38 38">
    <defs>
      <radialGradient id="orb" cx=".5" cy=".9" r=".9">
        <stop offset="0" stopColor="#3fd4f8" />
        <stop offset=".45" stopColor="#1873ac" />
        <stop offset="1" stopColor="#3f6076" />
      </radialGradient>
      <linearGradient id="gloss" x1="0" x2="0" y1="0" y2="1">
        <stop offset="0" stopColor="#fff" stopOpacity=".6" />
        <stop offset="1" stopColor="#fff" stopOpacity=".1" />
      </linearGradient>
    </defs>
    <circle cx="19" cy="19" r="18" fill="url(#orb)" stroke="#8ba4b3" />
    <path d="M2 18A17 17 0 0 1 36 18Q19 24 2 18Z" fill="url(#gloss)" />
    <path d="M11 9Q15 6 19 9L17.500 17Q13 15 9 17Z" fill="#f0592b" />
    <path d="M20 9.500Q25 12 31 9L29 17Q24 20 18.500 17.500Z" fill="#8cc63f" />
    <path d="M8.500 18.500Q13 16 17 18.500L15.500 26Q11 24 7 26Z" fill="#3fa9f5" />
    <path d="M18.500 19Q23 21.500 28.500 18.500L27 26Q22 29 16.500 26.500Z" fill="#ffc91f" />
  </svg>
);

const Folder = () => (
  <svg width="34" height="32" viewBox="0 0 34 32">
    <path d="M2 2H10L12 5H31V28H2Z" fill="#f3dd86" stroke="#c9a84a" />
    <path d="M5 8H33V29H3Z" fill="#fbeeb0" stroke="#d8bf6a" />
    <path d="M4 2H8V4H4Z" fill="#3cb54a" />
    <path d="M12 4H16V6H12Z" fill="#e2452f" />
    <path d="M22 6H27V8H22Z" fill="#2f8fe0" />
    <path d="M5 31V21Q5 18 8 18H26Q29 18 29 21V31H24V23H10V31Z" fill="#9fd6ee" stroke="#5ba9cc" />
  </svg>
);

const Bird = () => (
  <svg width="32" height="32" viewBox="0 0 32 32">
    <path d="M2 12Q2 4 10 1Q14 0 16 2Q24 1 29 8Q33 16 29 24Q24 31 18 31Q24 28 24 24L6 22Q2 18 2 12Z" fill="#1d4d94" />
    <path d="M10 5Q20 0 27 9Q31 16 28 23Q27 12 18 9Q13 8 10 5Z" fill="#4f9ad8" />
    <path d="M4 13L14 12L23 19L20 28L7 24Q3 19 4 13Z" fill="#f3f1ec" stroke="#b8b4aa" />
    <path d="M4 13L13 21L23 19" fill="none" stroke="#9a968c" />
    <path d="M6 10Q8 4 14 6L12 10Z" fill="#0c2a58" />
  </svg>
);

const Fox = () => (
  <svg width="32" height="32" viewBox="0 0 32 32">
    <circle cx="17" cy="14" r="12" fill="#1c67b4" />
    <circle cx="18" cy="9" r="6" fill="#4bb3e8" />
    <path d="M2 6Q4 8 8 7Q12 6 14 10L10 13Q10 19 16 20Q22 20 24 16Q27 10 23 3Q31 8 31 17Q29 31 16 31Q3 30 1 17Q0 11 2 6Z" fill="#e8641b" />
    <path d="M24 3Q31 8 31 17Q29 28 20 30Q28 22 27 13Q27 7 24 3Z" fill="#fbc02d" />
  </svg>
);

const Palette = () => (
  <svg width="32" height="32" viewBox="0 0 32 32">
    <path d="M3 14Q6 4 17 5Q29 8 27 18Q25 29 14 28Q8 28 10 22Q11 18 6 19Q2 19 3 14Z" fill="#cfe0ee" stroke="#7f98ad" />
    <circle cx="9" cy="13" r="2.500" fill="#e2452f" />
    <circle cx="15" cy="9" r="2.500" fill="#f5c52b" />
    <circle cx="22" cy="13" r="2.500" fill="#3cb54a" />
    <circle cx="21" cy="20" r="2.500" fill="#2f7fe0" />
    <path d="M30 1L18 22L15 25L16 20L28 1Z" fill="#d9822b" stroke="#8a4a12" />
  </svg>
);

/* ---------- page ---------- */

export default function App() {
  return (
    <Desktop>
      <GlobalStyle />
      <TitleBar>
        <AquaLogo size={15} />
        <TitleText>aquasuite 2014 - 1.3</TitleText>
        <WindowButtons>
          <WindowButton aria-label="Minimieren">
            <svg width="12" height="5" viewBox="0 0 12 5"><path d="M.5 .5H11.500V4.500H.5Z" fill="#fff" stroke="#444" /></svg>
          </WindowButton>
          <WindowButton aria-label="Wiederherstellen">
            <svg width="12" height="12" viewBox="0 0 12 12" fill="none" stroke="#fff" strokeWidth="1.500"><path d="M4 3V1H11V8H9M1 4H8V11H1ZM4 6.500V8.500" /></svg>
          </WindowButton>
          <WindowButton aria-label="Schließen">
            <svg width="12" height="10" viewBox="0 0 12 10"><path d="M2 1L10 9M10 1L2 9" stroke="#fff" strokeWidth="2.500" /></svg>
          </WindowButton>
        </WindowButtons>
      </TitleBar>

      <AppWindow>
        <Sidebar>
          <Rail>
            <CollapseArrow />
            <Brand>aquacomputer</Brand>
            <Rss />
          </Rail>
          <Nav>
            <NavGroup>
              <NavHead>
                Übersichtsseiten
                <HeadTools>
                  <button aria-label="Seite hinzufügen"><Plus size={20} /></button>
                </HeadTools>
              </NavHead>
              <NavItem>
                <Grip />
                <NavIcon><Thumb /></NavIcon>
                <NavLabel>
                  <NavButton>aquaero</NavButton>
                  <Desk />
                  <ToolColumn>
                    <LockButton aria-label="Entsperren"><Lock /></LockButton>
                    <button aria-label="Seite einstellen"><Gear /></button>
                  </ToolColumn>
                </NavLabel>
              </NavItem>
            </NavGroup>
            <NavHead>Datenlogger</NavHead>
            <NavGroup $gap={5}>
              <NavGroup>
                <NavHead $top>aquaero<DeviceTools /></NavHead>
                {deviceItems.map(l => <Item key={l} label={l} />)}
              </NavGroup>
              <NavHead $top>mps<DeviceTools /></NavHead>
              <NavHead $top>mps<DeviceTools /></NavHead>
            </NavGroup>
            <NavGroup>
              <NavHead>aquasuite</NavHead>
              <Item label="Einstellungen" icon="System" />
            </NavGroup>
          </Nav>
        </Sidebar>

        <Main>
          <Backdrop width="120" height="420" viewBox="0 0 120 420" fill="none" stroke="#fff" strokeOpacity=".07">
            <circle cx="-22" cy="209" r="172" strokeWidth="36" />
            <path d="M0 90L60 160M0 300L60 240" strokeWidth="24" />
          </Backdrop>

          <Panel $pad="10px 20px 0 10px">
            <Stack>
              <Values rows={[['Wasser Kalt', '33,4 °C'], ['Wasser Wahrm', '34,6 °C']]} />
              <Values before={20} rows={[['Gehäuse', '34,2 °C'], ['Zu Luft', '27,2 °C']]} />
              <Values before={70} rows={[['Flow 1', '49,6 l/h']]} />
              <Values before={20} rows={[['Leistungsmessung 1', '70,0 W']]} />
              <Values before={30} rows={[['Aktuelle Alarmstufe', '0']]} />
            </Stack>
            <Stack>
              <TempWidget
                title="Wasser Kalt"
                value="33,4 °C"
                stats={['34,0 °C', '33,4 °C', '33,7 °C', '8 m']}
                id="cold"
                line={[[0, 58], [0.15, 59], [0.5, 60], [1, 61]]}
                top="#9448ae"
              />
              <Widget $width={300}>
                <WidgetHead>Flow 1</WidgetHead>
                <Body $height={80}>
                  <Big $line={38}>50 l/h</Big>
                  <BarFrame>
                    <BarFill $color="#0000ff" style={{ width: '50%' }} />
                  </BarFrame>
                </Body>
              </Widget>
            </Stack>
            <Stack>
              <TempWidget
                title="Wasser Wahrm"
                value="34,6 °C"
                stats={['35,4 °C', '34,6 °C', '34,9 °C', '8 m']}
                id="warm"
                line={[[0, 51], [0.15, 52.5], [0.5, 54], [1, 55]]}
                top="#a048a4"
              />
              <Widget $width={300}>
                <WidgetHead>
                  <span>Leistungsmessung 1</span>
                  <span>70 W</span>
                </WidgetHead>
                <Body $height={80}>
                  <Gauge height={80} radius={138} cy={160} sweep={45} max={500} major={100} minor={20} value={70} unit="W" name="Leistungsmessung 1" unitY={54} nameY={72} size={12} pivot={162} reach={131} marker />
                </Body>
              </Widget>
            </Stack>
            <Stack $gap={10}>
              <PanelRow>
                <ColumnWidget title="Zu Luft" value="27,2 °C" width={90} fill={34} color="#9f00d2" />
                <ColumnWidget title="Gehäuse" value="34,2 °C" width={90} fill={56} color="#c400b2" />
                <ColumnWidget title="Delta Wasser" value="1,2 °C" width={80} />
                <ColumnWidget title="Delta Luft" value="7,0 °C" width={80} />
                <Widget $width={80} $flat>
                  <WidgetHead $flat>Relais</WidgetHead>
                  <Center $height={180}><Relay /></Center>
                </Widget>
              </PanelRow>
              <AlarmRow>
                <Widget $width={100} $flat>
                  <WidgetHead $flat>Aktuelle Alarmstufe</WidgetHead>
                  <Center $height={70}><Bell /></Center>
                </Widget>
                <AlarmValue>
                  <Big $line={32}>0</Big>
                </AlarmValue>
                <Corner>
                  <Center $height={90}><Thermo size={70} level={15} /></Center>
                </Corner>
              </AlarmRow>
            </Stack>
          </Panel>

          <Panel>
            <Values rows={four('Target value', ['0,0 %', '0,0 %', '0,0 %', '0,0 %'])} />
            <Values rows={four('Two point', ['0,0 %', '0,0 %', '0,0 %', '0,0 %'])} />
            <Values rows={four('Curve controller', ['20,9 %', '0,0 %', '0,0 %', '0,0 %'])} />
            <Values rows={[['D5-13+14', '0,0 %'], ['D5-14', '0,0 %']]} />
            <Corner><Knob /></Corner>
          </Panel>

          <Panel>
            {fans.map((f, i) => <FanWidget key={f.title} data={f} id={`fan${i}`} />)}
            <Corner><Fan size={70} /></Corner>
          </Panel>

          <PanelRow>
            <Panel $pad="10px 20px">
              <GaugeGrid>
                <GaugeWidget title="Pumpenleistung" value="25 %">{percentGauge(25)}</GaugeWidget>
                <GaugeWidget title="Pumpenleistung" value="25 %">{percentGauge(25)}</GaugeWidget>
                <GaugeWidget title="Drehzahl" value="1702 rpm">{rpmGauge(1702)}</GaugeWidget>
                <GaugeWidget title="Drehzahl" value="1688 rpm">{rpmGauge(1688)}</GaugeWidget>
              </GaugeGrid>
            </Panel>
            <Panel $grow>
              <Widget $width={540}>
                <WidgetHead />
                <Body $height={210}><HistoryChart /></Body>
              </Widget>
              <Corner><CurveIcon /></Corner>
            </Panel>
          </PanelRow>

          <Foot>
            <Watermark>aquasuite</Watermark>
            <button aria-label="Element hinzufügen"><Plus size={44} /></button>
          </Foot>
        </Main>
      </AppWindow>

      <DataDialog />

      <Taskbar>
        <Launcher>
          <button aria-label="Start"><StartOrb /></button>
          <button aria-label="Explorer"><Folder /></button>
          <button aria-label="E-Mail"><Bird /></button>
        </Launcher>
        <TaskButton><Fox />problem mit aqua...</TaskButton>
        <TaskButton $active><AquaLogo size={32} />aquasuite 2014 - 1.3</TaskButton>
        <TaskButton><Palette />Unbenannt.png - ...</TaskButton>
        <Tray>
          <svg width="8" height="4" viewBox="0 0 8 4"><path d="M4 0L8 4H0Z" fill="#fff" /></svg>
          <svg width="0" height="0" />
          <AquaLogo size={16} />
          <svg width="16" height="16" viewBox="0 0 16 16">
            <path d="M1 1H15L9 8L15 15H1Z" fill="#f2f2f2" />
            <path d="M1 1H5V7L11 1H15L6 11L5 15H1Z" fill="#d81e1e" />
            <path d="M9 9L15 15H10Z" fill="#555" />
          </svg>
          <svg width="16" height="16" viewBox="0 0 16 16" fill="none" stroke="#fff">
            <path d="M6.500 3.500H14.500V11.500H4.500M9.500 12V14.500M6 14.500H13M.5 1.500H5.500V5.500H.5ZM2.500 6V15" strokeWidth="1.300" />
          </svg>
          <svg width="16" height="16" viewBox="0 0 16 16" fill="none" stroke="#fff">
            <path d="M1 5.500H3L7 1.500V14.500L3 10.500H1Z" fill="#fff" />
            <path d="M9 5.500Q10.500 8 9 10.500M11 4Q14 8 11 12M13 2.500" />
          </svg>
          <Clock>
            <div>22:30</div>
            <div>08.11.2014</div>
          </Clock>
          <ShowDesktop aria-label="Desktop anzeigen" />
        </Tray>
      </Taskbar>
    </Desktop>
  );
}
